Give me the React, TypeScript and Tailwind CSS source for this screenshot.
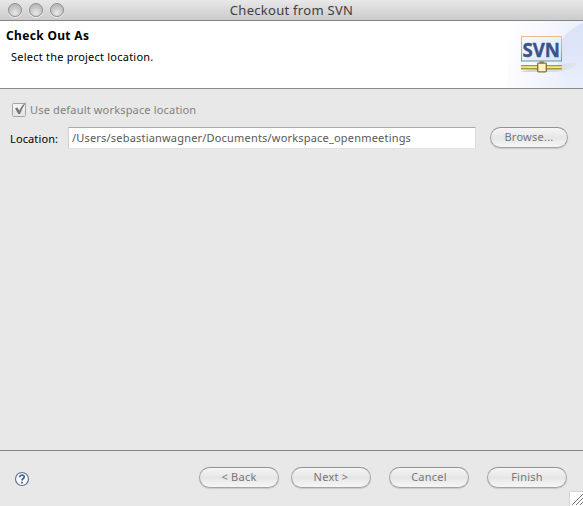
import type { ReactNode } from 'react';

const lights = [0, 1, 2];

function AquaButton({ children, className }: { children: ReactNode; className: string }) {
  return (
    <button
      className={`flex h-[21px] shrink-0 items-center justify-center rounded-full border-[1.5px] border-t-[#929292] border-r-[#a5a5a5] border-b-[#a4a4a4] border-l-[#a5a5a5] bg-linear-to-b from-[#f6f6f6] via-[#e6e6e6] via-50% to-[#f6f6f6] pb-[2px] text-[11px] leading-none tracking-[0.25px] whitespace-nowrap text-[#777] shadow-[0_1px_1px_#c9c9c9] ${className}`}
    >
      {children}
    </button>
  );
}

function SvnLogo() {
  return (
    <svg width="75" height="67" viewBox="0 0 75 67" className="block">
      <defs>
        <linearGradient id="wash" x1="0" y1="0" x2="1" y2="0.3">
          <stop offset="0" stopColor="#ffffff" />
          <stop offset="0.5" stopColor="#f6f8fe" />
          <stop offset="1" stopColor="#e9eefb" />
        </linearGradient>
        <linearGradient id="swoosh" x1="0" y1="0" x2="0" y2="1">
          <stop offset="0" stopColor="#dbe3f7" />
          <stop offset="0.5" stopColor="#dfe6f8" />
          <stop offset="1" stopColor="#e9eefb" stopOpacity="0" />
        </linearGradient>
        <linearGradient id="frame" x1="0" y1="0" x2="0" y2="1">
          <stop offset="0" stopColor="#e8bd84" />
          <stop offset="0.55" stopColor="#a9b3a8" />
          <stop offset="1" stopColor="#66949f" />
        </linearGradient>
        <linearGradient id="pane" x1="0" y1="0" x2="1" y2="1">
          <stop offset="0" stopColor="#fafcff" />
          <stop offset="1" stopColor="#d6e4f6" />
        </linearGradient>
        <linearGradient id="shade" x1="0" y1="0" x2="1" y2="0">
          <stop offset="0" stopColor="#c5c6d8" />
          <stop offset="1" stopColor="#dfe3f3" />
        </linearGradient>
      </defs>
      <rect width="75" height="67" fill="url(#wash)" />
      <path d="M75 2C65 6 55 14 50 24V67H75Z" fill="url(#swoosh)" />
      <path d="M13 51Q20 48 32 48H54V43Q64 41 70 42Q63 50 48 51Z" fill="url(#shade)" opacity=".8" />
      <rect x="13.5" y="15.5" width="40" height="24.5" fill="url(#pane)" stroke="url(#frame)" />
      <text x="14.5" y="35.5" textLength="37.5" lengthAdjust="spacingAndGlyphs" fontFamily="Noto Sans, sans-serif" fontWeight="700" fontSize="19.5" fill="#3d5288" stroke="#3d5288" strokeWidth=".4">SVN</text>
      <rect x="13" y="44" width="41" height="4.5" fill="#a49b34" />
      <rect x="13" y="45.2" width="41" height="1.8" fill="#eee88c" />
      <path d="M33.8 40.5v2" stroke="#8b7f3d" strokeWidth="4" />
      <rect x="29.7" y="42.2" width="8.6" height="8.6" rx=".8" fill="#fff3c4" stroke="#866f28" strokeWidth="1.3" />
    </svg>
  );
}

export default function App() {
  return (
    <main className="flex h-[506px] w-[583px] flex-col overflow-hidden bg-[#e8e8e8] font-['Noto_Sans',sans-serif] text-[11px] text-black">
      <header className="grid h-[21px] shrink-0 grid-cols-[64px_1fr_64px] items-center border-b border-[#858585] bg-linear-to-b from-[#e8e8e8] to-[#cbcbcb]">
        <div className="flex gap-[7px] pl-2">
          {lights.map((n) => (
            <span key={n} className="size-[14px] rounded-full border border-[#8e8e8e] bg-[radial-gradient(circle_at_50%_75%,#e3e3e3_10%,#c8c8c8_50%,#adadad_100%)] shadow-[0_1px_0_#eee]" />
          ))}
        </div>
        <h1 className="-mt-px text-center text-[13px] leading-5 tracking-[0.28px] text-[#404040]">Checkout from SVN</h1>
      </header>

      <section className="flex h-[68px] shrink-0 justify-between border-b border-[#8c8c8c] bg-white">
        <div className="pt-[7px] pl-[6px]">
          <h2 className="text-[12px] leading-4 font-bold tracking-[0.33px]">Check Out As</h2>
          <p className="mt-[5px] pl-[5px] leading-4 tracking-[0.22px]">Select the project location.</p>
        </div>
        <SvnLogo />
      </section>

      <section className="flex h-[362px] shrink-0 flex-col border-b border-[#858585]">
        <label className="mt-3 flex h-[18px] items-center pl-3 text-[#808080]">
          <svg width="18" height="18" viewBox="0 0 18 18" className="shrink-0">
            <rect x=".5" y="2.5" width="13" height="13" rx="1" fill="#f3f3f3" stroke="#a4a4a4" />
            <path d="M1 9h12v6H1Z" fill="#e7e7e7" />
            <path d="M3 7.2L5.6 6.6L7.2 9.8Q9.8 4 14.4 .8Q10.5 6.5 8 13H6.3Z" fill="#777" />
          </svg>
          <span className="leading-4 tracking-[0.17px]">Use default workspace location</span>
        </label>
        <div className="mt-2 flex h-[22px] items-center pl-[10px]">
          <span className="w-[58px] shrink-0 pt-[2px] leading-4 tracking-[0.12px]">Location:</span>
          <div className="flex h-[22px] w-[408px] shrink-0 items-center border border-t-[#aaa] border-r-[#dcdcdc] border-b-[#e2e2e2] border-l-[#cfcfcf] bg-white pl-[3px] text-[#595959]">
            <span className="leading-4 tracking-[0.19px]">/Users/sebastianwagner/Documents/workspace_openmeetings</span>
          </div>
          <AquaButton className="mb-px ml-[14px] w-[78px]">Browse...</AquaButton>
        </div>
      </section>

      <footer className="flex h-[55px] items-start pt-4">
        <svg width="16" height="16" viewBox="0 0 16 16" className="mt-[4px] ml-[14px] shrink-0">
          <circle cx="8" cy="8" r="6.5" fill="#fafcff" stroke="#607697" strokeWidth="1.2" />
          <path d="M5.8 6.2C5.7 3.2 10.5 3.4 10.2 6.1C10 7.5 8 7.6 8 9.4M8 10.8v1.6" fill="none" stroke="#455f8a" strokeWidth="1.7" />
        </svg>
        <AquaButton className="ml-[169px] w-[80px]">&lt; Back</AquaButton>
        <AquaButton className="ml-[12px] w-[80px]">Next &gt;</AquaButton>
        <AquaButton className="ml-[18px] w-[80px]">Cancel</AquaButton>
        <AquaButton className="ml-[18px] w-[80px]">Finish</AquaButton>
        <svg width="14" height="15" viewBox="0 0 14 15" className="mt-6 ml-[2px] shrink-0">
          <path d="M0 0h14v15H0Z" fill="#fff" />
          <path d="M.5 15V.5H14" fill="none" stroke="#d5d5d5" />
          <path d="M3 14L14 3M7 14L14 7M11 14L14 11" stroke="#777" />
        </svg>
      </footer>
    </main>
  );
}
